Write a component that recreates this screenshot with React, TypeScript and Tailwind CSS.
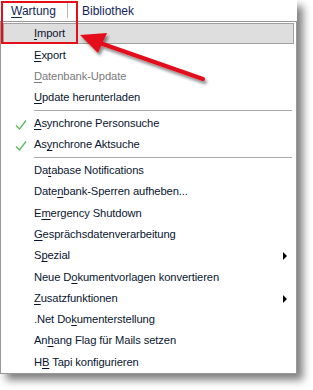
type Item = {
  label: string
  key?: number // index of the access-key letter
  disabled?: boolean
  checked?: boolean
  submenu?: boolean
  active?: boolean
  sep?: boolean
}

const items: Item[] = [
  { label: "Import", key: 0, active: true },
  { label: "Export", key: 0 },
  { label: "Datenbank-Update", key: 0, disabled: true },
  { label: "Update herunterladen", key: 0 },
  { label: "", sep: true },
  { label: "Asynchrone Personsuche", key: 0, checked: true },
  { label: "Asynchrone Aktsuche", key: 2, checked: true },
  { label: "", sep: true },
  { label: "Database Notifications", key: 2 },
  { label: "Datenbank-Sperren aufheben...", key: 4 },
  { label: "Emergency Shutdown", key: 1 },
  { label: "Gesprächsdatenverarbeitung", key: 0 },
  { label: "Spezial", key: 1, submenu: true },
  { label: "Neue Dokumentvorlagen konvertieren", key: 6 },
  { label: "Zusatzfunktionen", key: 0, submenu: true },
  { label: ".Net Dokumenterstellung", key: 7 },
  { label: "Anhang Flag für Mails setzen", key: 2 },
  { label: "HB Tapi konfigurieren", key: 1 },
]

function Label({ text, k }: { text: string; k?: number }) {
  if (k === undefined) return <>{text}</>
  return (
    <>
      {text.slice(0, k)}
      <span className="underline underline-offset-2">{text[k]}</span>
      {text.slice(k + 1)}
    </>
  )
}

function Check() {
  return (
    <svg width="12" height="12" viewBox="0 0 12 12" className="absolute left-[11px] top-[5px]">
      <polyline points="1,6.5 4.5,10 11,1.5" fill="none" stroke="#5cb85c" strokeWidth="1.3" />
    </svg>
  )
}

export default function App() {
  return (
    <div
      className="relative w-[313px] h-[390px] bg-white overflow-hidden text-[11.2px] tracking-[-0.1px] text-[#0a1630]"
      style={{ fontFamily: '"Liberation Sans", Arial, sans-serif' }}
    >
      <div className="w-[297px] shadow-[6px_6px_8px_rgba(0,0,0,0.5)]">
        {/* Menu bar */}
        <div className="h-[21px] flex items-center bg-white text-[#13255a] text-[12px] tracking-normal">
          <div className="pl-[11px] w-[67px]">
            <Label text="Wartung" k={0} />
          </div>
          <div className="w-px h-[15px] bg-[#b5b5b5]" />
          <div className="pl-[14px]">Bibliothek</div>
        </div>

        {/* Dropdown */}
        <div className="border border-[#979797] bg-white pt-[1px] px-[2px]">
          {items.map((it, i) =>
            it.sep ? (
              <div key={i} className="h-[4.5px] flex items-center pl-[31px] pr-[2px]">
                <div className="w-full h-px bg-[#a9a9a9]" />
              </div>
            ) : (
              <div
                key={i}
                className={
                  "relative h-[21.3px] flex items-center pl-[30px] " +
                  (it.active ? "bg-[#dedede] border border-[#a0a0a0]" : "border border-transparent") +
                  (it.disabled ? " text-[#7a7a7a]" : "")
                }
              >
                {it.checked && <Check />}
                <span className="whitespace-nowrap">
                  <Label text={it.label} k={it.key} />
                </span>
                {it.submenu && (
                  <svg width="5" height="8" viewBox="0 0 5 8" className="absolute right-[5px] top-[6px]">
                    <polygon points="0,0 4,4 0,8" fill="#000" />
                  </svg>
                )}
              </div>
            )
          )}
        </div>
      </div>

      {/* Red highlight frame */}
      <div className="absolute left-[1px] top-[1px] w-[77px] h-[43px] border-2 border-[#e3101c]" />

      {/* Red arrow */}
      <svg className="absolute left-0 top-0" width="313" height="390">
        <defs>
          <filter id="sh" x="-20%" y="-20%" width="140%" height="160%">
            <feDropShadow dx="2" dy="3" stdDeviation="1.8" floodColor="#000" floodOpacity="0.45" />
          </filter>
        </defs>
        <g filter="url(#sh)">
          <line x1="203" y1="79" x2="100" y2="43" stroke="#e3101c" strokeWidth="4" strokeLinecap="round" />
          <polygon points="80,35 107,33 98,53" fill="#e3101c" />
        </g>
      </svg>
    </div>
  )
}
